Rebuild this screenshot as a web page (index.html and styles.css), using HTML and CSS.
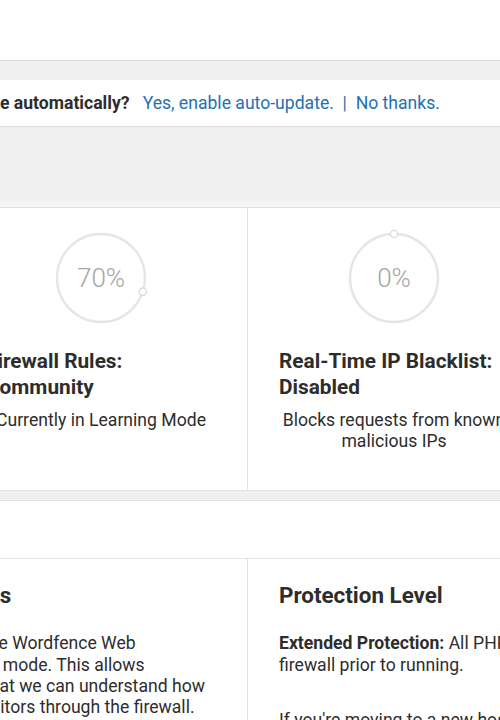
FILE: index.html
```html
<!DOCTYPE html>
<html lang="en">
<head>
<meta charset="utf-8">
<title>Firewall</title>
<link rel="stylesheet" href="styles.css">
</head>
<body>
<header class="topbar"></header>
<div class="page">
  <div class="notice">
    <strong>Do you want Wordfence to stay up-to-date automatically?</strong>&nbsp;&nbsp;&nbsp;<a href="#" class="link">Yes, enable auto-update.</a><span class="link">&nbsp;&nbsp;|&nbsp;&nbsp;</span><a href="#" class="link">No thanks.</a>
  </div>
  <section class="summary">
    <div class="summary-head"></div>
    <div class="cards">
      <div class="card">
        <svg class="ring" viewBox="0 0 100 100">
          <circle cx="50" cy="50" r="44" class="ring-track"/>
          <circle cx="50" cy="6" r="3.6" class="ring-dot"/>
          <text x="50" y="50" class="ring-label">100%</text>
        </svg>
        <h3 class="card-title">Web Application Firewall</h3>
        <p class="card-desc">Stops Complex Attacks</p>
      </div>
      <div class="card">
        <svg class="ring" viewBox="0 0 100 100">
          <circle cx="50" cy="50" r="44" class="ring-track"/>
          <circle cx="91.85" cy="63.6" r="3.6" class="ring-dot"/>
          <text x="50" y="50" class="ring-label">70%</text>
        </svg>
        <h3 class="card-title">Firewall Rules: Community</h3>
        <p class="card-desc">Currently in Learning Mode</p>
      </div>
      <div class="card">
        <svg class="ring" viewBox="0 0 100 100">
          <circle cx="50" cy="50" r="44" class="ring-track"/>
          <circle cx="50" cy="6" r="3.6" class="ring-dot"/>
          <text x="50" y="50" class="ring-label">0%</text>
        </svg>
        <h3 class="card-title">Real-Time IP Blacklist: Disabled</h3>
        <p class="card-desc">Blocks requests from known malicious IPs</p>
      </div>
      <div class="card">
        <svg class="ring" viewBox="0 0 100 100">
          <circle cx="50" cy="50" r="44" class="ring-track"/>
          <circle cx="50" cy="6" r="3.6" class="ring-dot"/>
          <text x="50" y="50" class="ring-label">100%</text>
        </svg>
        <h3 class="card-title">Brute Force Protection</h3>
        <p class="card-desc">Stops Password Guessing Attacks</p>
      </div>
    </div>
  </section>
  <section class="block">
    <div class="block-head"></div>
    <div class="cols">
      <div class="col col-left">
        <h2 class="col-title">Web Application Firewall Status</h2>
        <p class="col-text col-text-left"><strong>Learning Mode:</strong> When you first install the Wordfence Web Application Firewall, it will be in learning mode. This allows Wordfence to learn about your site so that we can understand how to protect it and how to allow normal visitors through the firewall. We recommend you let Wordfence learn for a week before you enable the firewall.</p>
      </div>
      <div class="col">
        <h2 class="col-title">Protection Level</h2>
        <p class="col-text"><strong>Extended Protection:</strong> All PHP requests will be processed by the firewall prior to running.</p>
        <p class="col-text">If you're moving to a new host or a new installation location, you may need to temporarily disable extended protection to avoid any file not found errors.</p>
      </div>
    </div>
  </section>
</div>
</body>
</html>
```
FILE: styles.css
```css
* { box-sizing: border-box; }
html, body { margin: 0; padding: 0; }
body {
  width: 500px;
  height: 720px;
  overflow: hidden;
  background: #f0f0f0;
  font-family: Roboto, "Noto Sans", sans-serif;
  font-size: 17.6px;
  color: #2d2d2d;
}
.topbar {
  height: 61px;
  background: #fff;
  border-bottom: 1px solid #dadada;
}
.page {
  margin-left: -338px;
  width: 1172px;
}
.notice {
  margin-top: 19px;
  margin-left: -60px;
  padding-left: 75px;
  width: 1300px;
  height: 47px;
  background: #fff;
  border-bottom: 1px solid #dcdcdc;
  display: flex;
  align-items: center;
  white-space: nowrap;
}
.notice strong { font-weight: 700; color: #2d2d2d; }
.link { color: #2271b1; text-decoration: none; white-space: pre; }
.summary { margin-top: 74px; }
.summary-head {
  height: 7px;
  background: #f4f4f4;
  border-bottom: 1px solid #e2e2e2;
}
.cards {
  display: grid;
  grid-template-columns: repeat(4, 293px);
  background: #fff;
  border-bottom: 1px solid #e2e2e2;
}
.card {
  height: 282px;
  padding: 20px 31px 0;
  border-right: 1px solid #e2e2e2;
}
.ring { display: block; width: 100px; height: 100px; margin: 0 auto; overflow: visible; }
.ring-track { fill: none; stroke: #e6e6e6; stroke-width: 2.4; }
.ring-dot { fill: #fff; stroke: #dcdcdc; stroke-width: 1.4; }
.ring-label {
  font-family: Roboto, sans-serif;
  font-weight: 300;
  font-size: 26px;
  fill: #a4a4a4;
  text-anchor: middle;
  dominant-baseline: central;
}
.card-title {
  margin: 20px 0 0;
  font-size: 20.8px;
  line-height: 26px;
  font-weight: 700;
  color: #2d2d2d;
}
.card-desc {
  margin: 10px 0 0;
  text-align: center;
  line-height: 1.22;
}
.block {
  margin-top: 9px;
  background: #fff;
  border-top: 1px solid #e2e2e2;
}
.block-head {
  height: 58px;
  border-bottom: 1px solid #e2e2e2;
}
.cols {
  display: grid;
  grid-template-columns: 586px 586px;
}
.col { padding: 22px 31px; height: 200px; }
.col-left { border-right: 1px solid #e2e2e2; }
.col-title {
  margin: 0 0 23px;
  font-size: 22.4px;
  line-height: 1.3;
  font-weight: 700;
}
.col-text { margin: 0; line-height: 1.22; }
.col-text-left { margin-left: -5px; }
.col-text + .col-text { margin-top: 34px; }
```
